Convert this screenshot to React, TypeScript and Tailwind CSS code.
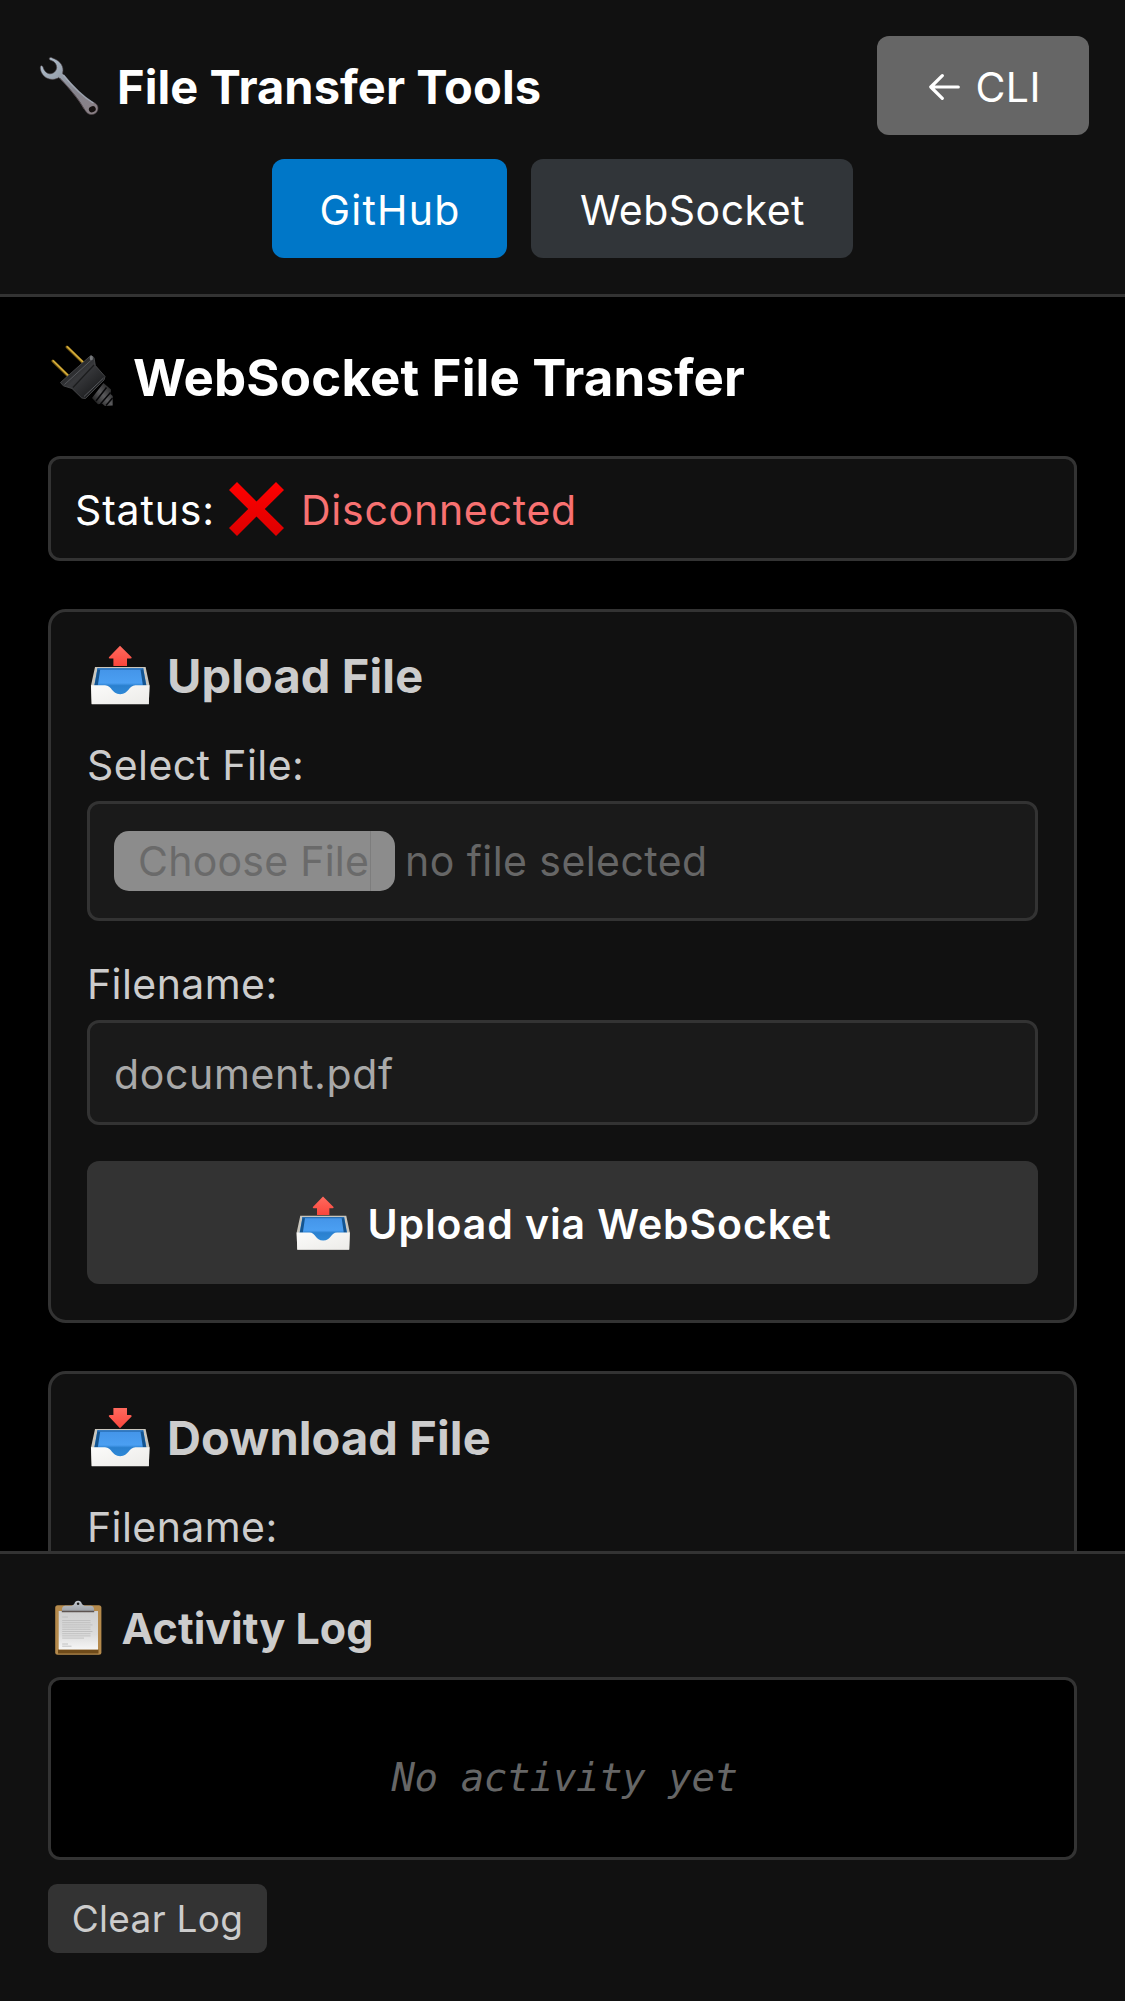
import type { ReactNode } from "react";

function WrenchIcon() {
  return (
    <svg viewBox="0 0 66 66" className="-mt-px h-[66px] w-[66px] shrink-0" aria-hidden="true">
      <defs>
        <linearGradient id="wrench" x1="0" y1="0" x2="1" y2="1">
          <stop offset="0" stopColor="#b4c4d2" />
          <stop offset="0.3" stopColor="#9aa4b0" />
          <stop offset="0.6" stopColor="#85848d" />
          <stop offset="1" stopColor="#8a7f84" />
        </linearGradient>
      </defs>
      <path
        d="M13.3 6.4C13.6 5.2 14.8 5.2 16.2 5.9C22.5 8 27.3 12.5 27 18.5L26.6 21.5C32 28 36.500 33.500 41 37.800C46.500 43 52 48.500 58 50.500C61.500 52 62.800 55.500 61.500 58.800C60 62.500 55 63.800 51.500 61.200C48.500 58.500 47 54.500 44 50.200C39 43 29 31.500 22.800 25.600C19.500 27.800 14.500 28 10.700 26C6 23.200 4.200 19 4.300 15C4.500 13.300 6 13.200 6.900 14.800C7.800 18.300 10 21.300 13.500 21.800C17.500 22 20.400 19 20.700 15.500C20.600 12 18.500 9.500 15.500 8.600C14 8 13.200 7.400 13.3 6.4Z"
        fill="url(#wrench)"
        stroke="#4d4347"
        strokeWidth="0.6"
      />
      <path d="M27.500 23C36 33.500 45 43.500 57.500 51" fill="none" stroke="#b5c0cf" strokeWidth="1.300" opacity="0.75" />
      <path d="M24 26C34 37 42 46.500 48 57" fill="none" stroke="#5c4e54" strokeWidth="1" opacity="0.7" />
      <ellipse cx="56.300" cy="57.300" rx="3.500" ry="3" fill="#15100f" transform="rotate(-20 56.300 57.300)" />
    </svg>
  );
}

function PlugIcon() {
  return (
    <svg viewBox="0 0 69 69" className="mt-1 h-[69px] w-[69px] shrink-0" aria-hidden="true">
      <defs>
        <linearGradient id="plugBody" x1="0.2" y1="0.2" x2="0.75" y2="0.8">
          <stop offset="0" stopColor="#1c1d1f" />
          <stop offset="0.45" stopColor="#38393c" />
          <stop offset="1" stopColor="#202123" />
        </linearGradient>
        <linearGradient id="plugCord" x1="0" y1="1" x2="1" y2="0">
          <stop offset="0" stopColor="#0c0c0c" />
          <stop offset="0.5" stopColor="#5a5a5c" />
          <stop offset="1" stopColor="#141414" />
        </linearGradient>
      </defs>
      <path d="M19 3L35 18.500M4.900 17L20.500 32.300" stroke="#7d5f14" strokeWidth="3" strokeLinecap="round" />
      <path d="M19.300 2.800L35.300 18.200M5.200 16.700L20.800 32" stroke="#d9b13d" strokeWidth="1.500" strokeLinecap="round" />
      <path d="M44 54L55.500 39L63 45.500L62.500 50L64.700 52V61.500L57 62L54 59.500L50 60.300Z" fill="url(#plugCord)" />
      <path d="M48 57L58.500 43.500M52.500 60L62.500 48.500M58 61.500L64.500 54" stroke="#08080a" strokeWidth="1.500" fill="none" />
      <path
        d="M43 11.300L46 13.700L47.300 21.500L57 32.500L56 36L37.500 54.500L33.800 54L24 44.500L15.300 41.800L12.500 38.500Z"
        fill="url(#plugBody)"
        stroke="#48494c"
        strokeWidth="0.900"
        strokeLinejoin="round"
      />
      <path d="M45 14.500L16.500 40.500M55.500 34L36 52.500" stroke="#56585c" strokeWidth="1" fill="none" />
      <path d="M46 21L25 43.500" stroke="#1b1c1d" strokeWidth="1.200" fill="none" />
      <ellipse cx="43.300" cy="14" rx="1.600" ry="2.200" fill="#77797c" />
    </svg>
  );
}

function TrayIcon({ direction, small = false }: { direction: "up" | "down"; small?: boolean }) {
  const id = `${direction}${small ? "Small" : ""}`;
  return (
    <svg viewBox="0 0 66 66" className={small ? "-mt-px h-[60px] w-[60px] shrink-0" : "h-[66px] w-[66px] shrink-0"} aria-hidden="true">
      <defs>
        <linearGradient id={`blue${id}`} x1="0" y1="0" x2="0" y2="1">
          <stop offset="0" stopColor="#4394e8" />
          <stop offset="0.55" stopColor="#4b9ff2" />
          <stop offset="0.65" stopColor="#2a80cf" />
          <stop offset="1" stopColor="#2f8ad8" />
        </linearGradient>
        <linearGradient id={`front${id}`} x1="0" y1="0" x2="1" y2="1">
          <stop offset="0" stopColor="#fbfbfa" />
          <stop offset="1" stopColor="#ecebe8" />
        </linearGradient>
        <linearGradient id={`red${id}`} x1="0" y1="0" x2="0" y2="1">
          <stop offset="0" stopColor="#ff6a5e" />
          <stop offset="1" stopColor="#fb463c" />
        </linearGradient>
      </defs>
      {direction === "up" ? (
        <path d="M33 2.800L44.600 14.200Q45 15.500 43.500 15.600H40V23H26.400V15.600H23Q21.300 15.500 21.900 14.200Z" fill={`url(#red${id})`} />
      ) : (
        <path d="M26.400 3H40V9.900H43.500Q45 10 44.600 11.400L33 23.200L21.900 11.400Q21.300 10 23 9.900H26.400Z" fill={`url(#red${id})`} />
      )}
      <path d="M8 24H58.600L62.500 42.500L61.800 61H4.700L4 42.500Z" fill="#c9c6bd" />
      <path d="M10.500 25.300H56.200L59.300 42V52H7.400V42Z" fill={`url(#blue${id})`} />
      <path d="M10.500 25.300L7.400 42.500H10.800L13.200 26.500ZM56.200 25.300L59.300 42.500H55.900L53.500 26.500Z" fill="#14548f" />
      <path d="M10.500 25.300H56.200L55.900 26.700H10.800Z" fill="#286fb5" />
      <path
        d="M4 42.300H18C25 42.300 24.500 51.200 33.200 51.200C42 51.200 41.500 42.300 48.500 42.300H62.500L61.800 61.200H4.700Z"
        fill={`url(#front${id})`}
      />
    </svg>
  );
}

function ClipboardIcon() {
  const rows = [22.500, 24.700, 26.900, 29.100, 31.300, 33.500, 35.700, 37.900, 40.100];
  return (
    <svg viewBox="0 0 60 60" className="h-[60px] w-[60px] shrink-0" aria-hidden="true">
      <defs>
        <linearGradient id="paper" x1="0" y1="0" x2="0" y2="1">
          <stop offset="0" stopColor="#cfcfcf" />
          <stop offset="0.6" stopColor="#dcdcdc" />
          <stop offset="1" stopColor="#f6f6f6" />
        </linearGradient>
        <linearGradient id="clip" x1="0" y1="0" x2="0" y2="1">
          <stop offset="0" stopColor="#c5cbd2" />
          <stop offset="1" stopColor="#9a9ea4" />
        </linearGradient>
      </defs>
      <rect x="7.200" y="7.200" width="46.200" height="49.600" rx="2.500" fill="#b58a4c" />
      <path d="M10 51.500H50.500V55.500H10Z" fill="#6f4b1a" />
      <rect x="10.700" y="13" width="39.300" height="38.500" fill="url(#paper)" />
      <g stroke="#bdbdbd" strokeWidth="0.900">
        <path d="M14.200 19H20M14.200 46H20M14.200 48.200H23.500" />
        {rows.map((y, i) => (
          <path key={y} d={i === 8 ? `M14.200 ${y}H36` : i % 3 === 2 ? `M14.200 ${y}H44.500` : `M14.200 ${y}H42.500`} />
        ))}
      </g>
      <path d="M14 14V10.500Q14.300 8 17 7.800H23.500Q25.500 7.500 26.500 5.500A3.700 3.700 0 0 1 33.700 5.500Q34.700 7.500 36.700 7.800H43Q45.700 8 46 10.500V14Z" fill="url(#clip)" />
      <path d="M13.800 12.700H46.200V14.200H13.800Z" fill="#5d5350" />
      <circle cx="30.100" cy="5.800" r="1.300" fill="#1b1b1b" />
    </svg>
  );
}

function CrossIcon() {
  return (
    <svg viewBox="0 0 55 54" className="absolute top-0 left-[154px] h-[54px] w-[55px]" aria-hidden="true">
      <defs>
        <linearGradient id="cross" x1="0" y1="0" x2="0" y2="1">
          <stop offset="0" stopColor="#ff0000" />
          <stop offset="1" stopColor="#dd0000" />
        </linearGradient>
      </defs>
      <path d="M8 0L27.500 19.500L47 0L55 8L35.800 27L55 46L47 54L27.500 34.500L8 54L0 46L19.200 27L0 8Z" fill="url(#cross)" />
    </svg>
  );
}

function BackArrow() {
  return (
    <svg viewBox="0 0 31 26" className="h-[26px] w-[31px] shrink-0" fill="none" stroke="currentColor" strokeWidth="3.2" strokeLinecap="round" strokeLinejoin="round" aria-hidden="true">
      <path d="M29.300 13H2M13.300 1.700L1.800 13L13.300 24.300" />
    </svg>
  );
}

function FieldLabel({ children }: { children: ReactNode }) {
  return <div className="mb-3 h-12 text-[41px] leading-[48px] tracking-[0.42px] text-[#ccc]">{children}</div>;
}

function Card({ icon, title, children }: { icon: ReactNode; title: string; children: ReactNode }) {
  return (
    <section className="mb-12 shrink-0 rounded-[18px] border-[3px] border-[#333] bg-[#111] p-9">
      <h3 className="-mt-px mb-[37px] flex h-[57px] items-center gap-[14px] text-[47px] leading-[57px] font-bold tracking-[0.1px] whitespace-nowrap text-[#ccc]">
        {icon}
        {title}
      </h3>
      {children}
    </section>
  );
}

export default function App() {
  return (
    <div className="flex h-[2001px] w-[1125px] flex-col overflow-hidden bg-black font-[Inter,sans-serif] text-white">
      <header className="flex h-[297px] shrink-0 flex-col gap-6 border-b-[3px] border-[#333] bg-[#111] px-9 pt-9">
        <div className="flex h-[99px] items-center justify-between">
          <h1 className="flex items-center gap-[15px] text-[47px] leading-[57px] font-bold tracking-[0.08px] whitespace-nowrap">
            <WrenchIcon />
            <span className="pt-px">File Transfer Tools</span>
          </h1>
          <button className="flex h-[99px] w-[212px] items-center rounded-[12px] bg-[#666] pt-[3px] pl-[52px] text-[41px] leading-[48px] tracking-[0.4px]">
            <BackArrow />
            <span className="ml-[15.5px]">CLI</span>
          </button>
        </div>
        <nav className="flex justify-center gap-6 text-[41px] leading-[48px]">
          <button className="h-[99px] w-[235px] rounded-[12px] bg-[#0077c8] pt-[3px] pl-px tracking-[1.2px]">GitHub</button>
          <button className="h-[99px] w-[322px] rounded-[12px] bg-[#313539] pt-[3px] pl-px tracking-[0.48px]">WebSocket</button>
        </nav>
      </header>

      <main className="flex h-[1254px] shrink-0 flex-col overflow-hidden px-12 pt-12">
        <h2 className="mb-12 flex h-[63px] shrink-0 items-center gap-[16px] text-[51px] leading-[60px] font-bold tracking-[0.14px] whitespace-nowrap">
          <PlugIcon />
          <span className="pt-[2px]">WebSocket File Transfer</span>
        </h2>

        <div className="mb-12 flex h-[105px] shrink-0 items-center rounded-[12px] border-[3px] border-[#333] bg-[#111] px-6 text-[41px] leading-[48px]">
          <div className="relative flex h-[54px] w-full items-center">
            <span className="w-[225px] pt-[3px] tracking-[0.85px]">Status:</span>
            <CrossIcon />
            <span className="pt-[3px] pl-px tracking-[0.75px] text-[#f87171]">Disconnected</span>
          </div>
        </div>

        <Card icon={<TrayIcon direction="up" />} title="Upload File">
          <FieldLabel>Select File:</FieldLabel>
          <div className="mb-[39px] flex h-[120px] items-center rounded-[12px] border-[3px] border-[#333] bg-[#1a1a1a] px-6 text-[41px] leading-[48px] text-[#666]">
            <div className="flex h-[60px] w-[281px] overflow-hidden rounded-[15px] bg-[#8c8c8c]">
              <div className="h-full w-[257px] border-r border-[#7d7d7d] pt-[6px] pl-6 tracking-[0.25px] whitespace-nowrap text-[#6a6a6a]">
                Choose File
              </div>
            </div>
            <span className="ml-[10px] tracking-[0.44px]">no file selected</span>
          </div>
          <FieldLabel>Filename:</FieldLabel>
          <div className="mb-9 h-[105px] rounded-[12px] border-[3px] border-[#333] bg-[#1a1a1a] px-6 pt-[27px] text-[41px] leading-[48px] tracking-[0.65px] text-[#a9a9a9]">
            document.pdf
          </div>
          <button className="flex h-[123px] w-full items-center justify-center gap-[14px] rounded-[12px] bg-[#333] pt-[3px] text-[41px] leading-[48px] font-semibold tracking-[0.9px] whitespace-nowrap">
            <TrayIcon direction="up" small />
            Upload via WebSocket
          </button>
        </Card>

        <Card icon={<TrayIcon direction="down" />} title="Download File">
          <FieldLabel>Filename:</FieldLabel>
          <div className="h-[105px] rounded-[12px] border-[3px] border-[#333] bg-[#1a1a1a]" />
        </Card>
      </main>

      <footer className="flex h-[450px] shrink-0 flex-col items-start border-t-[3px] border-[#333] bg-[#111] px-12 pt-12">
        <h4 className="mb-6 flex h-[51px] items-center gap-[13.5px] text-[43px] leading-[51px] font-bold text-[#ccc]">
          <ClipboardIcon />
          <span className="pt-[2px]">Activity Log</span>
        </h4>
        <div className="flex h-[183px] w-full items-center justify-center rounded-[12px] border-[3px] border-[#333] bg-black pt-[18px] pl-1 font-['DejaVu_Sans_Mono',monospace] text-[39px] leading-[48px] tracking-[-0.4px] text-[#666] italic">
          No activity yet
        </div>
        <button className="mt-6 h-[69px] w-[219px] rounded-[9px] bg-[#333] text-[37px] leading-[48px] tracking-[0.3px] text-[#ccc]">
          Clear Log
        </button>
      </footer>
    </div>
  );
}
